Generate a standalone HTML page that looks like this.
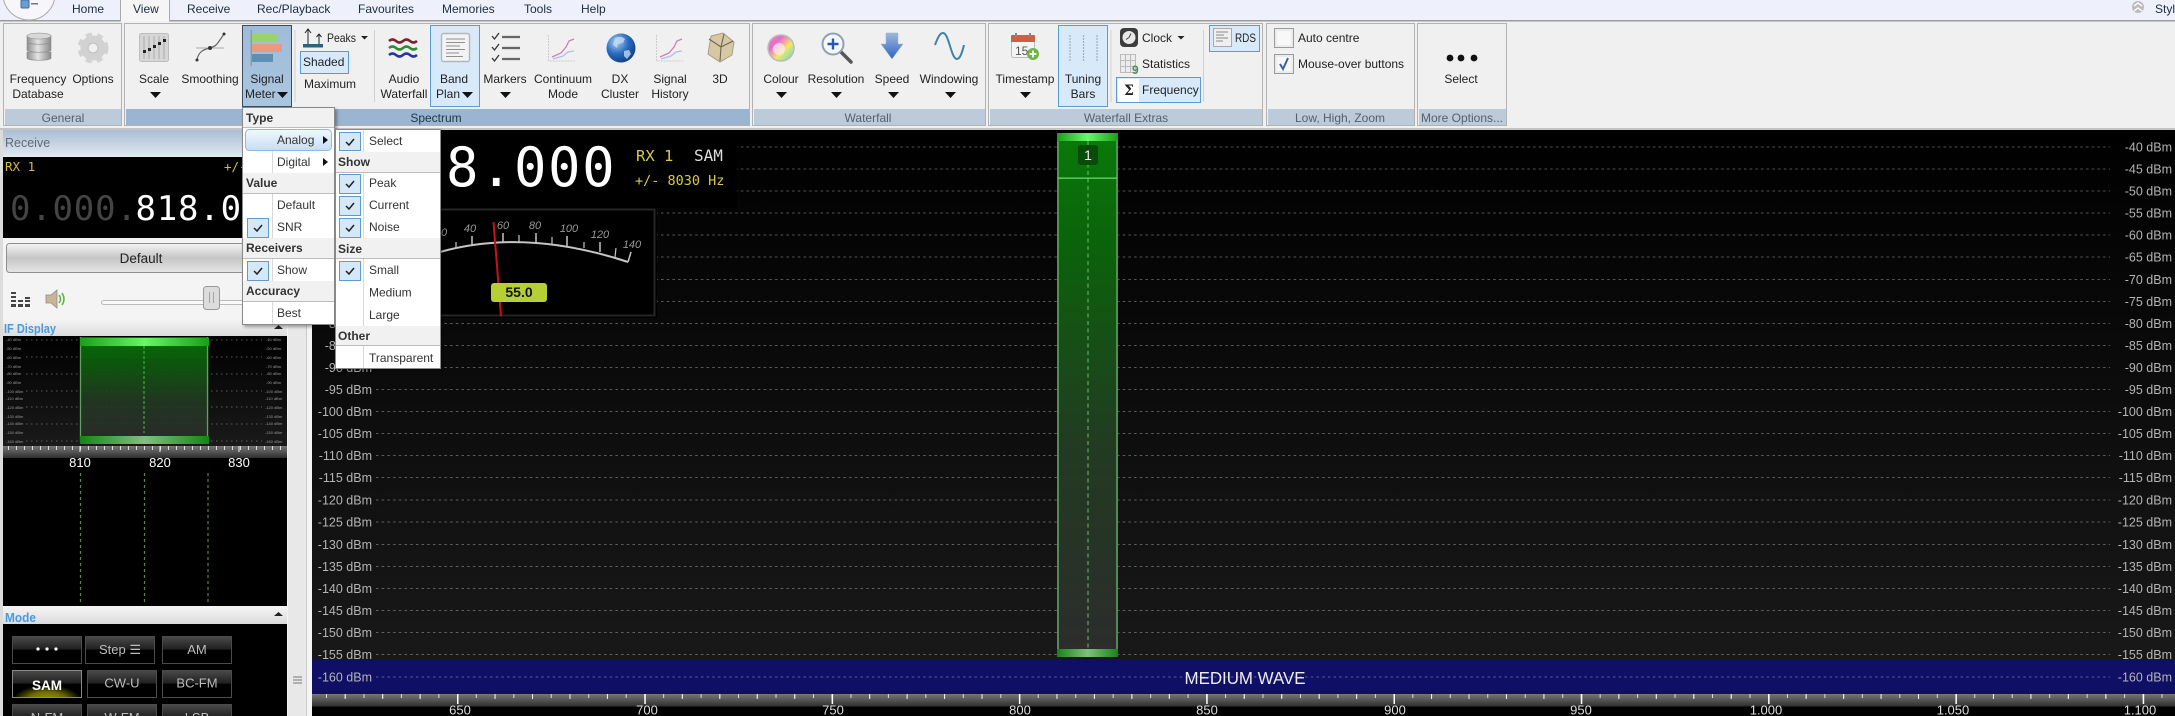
<!DOCTYPE html>
<html><head><meta charset="utf-8"><title>Signal meter</title>
<style>
html,body{margin:0;padding:0;background:#f0f0f0;width:2175px;height:716px;overflow:hidden}
svg{display:block;position:absolute;left:0;top:0}
text{font-family:"Liberation Sans",sans-serif;font-size:12px;fill:#222}
.m{text-anchor:middle}
.tab{fill:#1d2c3e}
.g{fill:#52616f;text-anchor:middle}
.h{font-weight:bold;fill:#333}
.i{fill:#333}
.db{font-size:12.5px;fill:#b4b4b4;text-anchor:end}
.fq{font-size:13px;fill:#ddd;text-anchor:middle}
.mono{font-family:"DejaVu Sans Mono","Liberation Mono",monospace}
.tiny{font-size:4px;fill:#999}
.mb{font-size:13px;fill:#bdbdbd;text-anchor:middle}
.ml{font-size:11px;font-style:italic;fill:#999;text-anchor:middle}
</style></head><body>
<svg width="2175" height="716" viewBox="0 0 2175 716" xmlns="http://www.w3.org/2000/svg">
<defs>
<linearGradient id="specBg" x1="0" y1="0" x2="0" y2="1"><stop offset="0" stop-color="#000"/><stop offset="1" stop-color="#1a1a1a"/></linearGradient>
<linearGradient id="gTop"><stop offset="0" stop-color="#18a018"/><stop offset=".5" stop-color="#66f866"/><stop offset="1" stop-color="#18a018"/></linearGradient>
<linearGradient id="gBot"><stop offset="0" stop-color="#158515"/><stop offset=".5" stop-color="#80c080"/><stop offset="1" stop-color="#158515"/></linearGradient>
<linearGradient id="gBody" x1="0" y1="0" x2="0" y2="1"><stop offset="0" stop-color="#0a7a0a"/><stop offset=".2" stop-color="#0a640a"/><stop offset=".6" stop-color="#223a22"/><stop offset="1" stop-color="#2c2c2c"/></linearGradient>
<linearGradient id="scale" x1="0" y1="0" x2="0" y2="1"><stop offset="0" stop-color="#777"/><stop offset="1" stop-color="#2e2e2e"/></linearGradient>
<linearGradient id="btn" x1="0" y1="0" x2="0" y2="1"><stop offset="0" stop-color="#4a4a4a"/><stop offset=".47" stop-color="#202020"/><stop offset=".5" stop-color="#000"/><stop offset="1" stop-color="#000"/></linearGradient>
<linearGradient id="hdrR" x1="0" y1="0" x2="0" y2="1"><stop offset="0" stop-color="#a9bdd4"/><stop offset="1" stop-color="#e2e9f1"/></linearGradient>
<linearGradient id="hdr" x1="0" y1="0" x2="0" y2="1"><stop offset="0" stop-color="#f6f6f6"/><stop offset="1" stop-color="#dcdcdc"/></linearGradient>
<linearGradient id="def" x1="0" y1="0" x2="0" y2="1"><stop offset="0" stop-color="#f4f4f4"/><stop offset=".5" stop-color="#c6c6c6"/><stop offset="1" stop-color="#e6e6e6"/></linearGradient>
<linearGradient id="an" x1="0" y1="0" x2="0" y2="1"><stop offset="0" stop-color="#f3f8fd"/><stop offset="1" stop-color="#c4def6"/></linearGradient>
<linearGradient id="cyl" x1="0" y1="0" x2="1" y2="0"><stop offset="0" stop-color="#8e8e8e"/><stop offset=".45" stop-color="#e4e4e4"/><stop offset="1" stop-color="#8a8a8a"/></linearGradient>
<linearGradient id="arr" x1="0" y1="0" x2="0" y2="1"><stop offset="0" stop-color="#9db8db"/><stop offset="1" stop-color="#2f63c5"/></linearGradient>
<linearGradient id="rain" x1="0" y1="0" x2="1" y2="1"><stop offset="0" stop-color="#f08a8a"/><stop offset=".3" stop-color="#e86ad8"/><stop offset=".6" stop-color="#f4e860"/><stop offset="1" stop-color="#50d8e8"/></linearGradient>
<radialGradient id="glob" cx=".35" cy=".3" r=".8"><stop offset="0" stop-color="#a9cdf0"/><stop offset=".5" stop-color="#2a6cc0"/><stop offset="1" stop-color="#0e3578"/></radialGradient>
<radialGradient id="sam" cx=".5" cy=".5" r=".5"><stop offset="0" stop-color="#a09800"/><stop offset=".55" stop-color="#6f6a00"/><stop offset="1" stop-color="#000"/></radialGradient>
<linearGradient id="sel" x1="0" y1="0" x2="0" y2="1"><stop offset="0" stop-color="#9ebbd8"/><stop offset="1" stop-color="#aac6df"/></linearGradient>
<clipPath id="sClip"><rect x="13" y="671" width="68" height="26"/></clipPath>
<filter id="sh" x="-10%" y="-10%" width="125%" height="120%"><feDropShadow dx="2" dy="2" stdDeviation="1.5" flood-color="#000" flood-opacity=".35"/></filter>
</defs>

<!-- top bar -->
<rect width="2175" height="20" fill="#eef1fb"/>
<rect y="20" width="2175" height="1.5" fill="#9b9b9b"/>
<circle cx="29" cy="-6" r="26" fill="#f6f6fb" stroke="#a9a9a9"/>
<rect x="21" y="0" width="8" height="8" rx="1" fill="#6f9bd0" stroke="#3b6fa8"/><rect x="31" y="3" width="7" height="1.5" fill="#777"/>
<rect x="120.5" y="-1" width="49" height="23" fill="#f5f5f5" stroke="#a9a9a9"/>
<text class="tab" x="72" y="13">Home</text>
<text class="tab" x="133" y="13">View</text>
<text class="tab" x="187" y="13">Receive</text>
<text class="tab" x="257" y="13">Rec/Playback</text>
<text class="tab" x="358" y="13">Favourites</text>
<text class="tab" x="442" y="13">Memories</text>
<text class="tab" x="524" y="13">Tools</text>
<text class="tab" x="581" y="13">Help</text>
<circle cx="2138" cy="7" r="6" fill="#bcbcbc"/>
<path d="M2134 6l4-3 4 3M2134 11l4-3 4 3" fill="none" stroke="#fff" stroke-width="1.4"/>
<text class="tab" x="2155" y="13">Style</text>

<!-- ribbon -->
<rect y="21.5" width="2175" height="107" fill="#f0f0f0"/>
<rect y="128" width="2175" height="2" fill="#c4c4c4"/>
<!-- panels -->
<g fill="#f0f0f0" stroke="#b2b2b2">
<rect x="3.5" y="23.5" width="118" height="102"/>
<rect x="124.5" y="23.5" width="625" height="102"/>
<rect x="752.5" y="23.5" width="233" height="102"/>
<rect x="988.5" y="23.5" width="274" height="102"/>
<rect x="1266.5" y="23.5" width="148" height="102"/>
<rect x="1417.5" y="23.5" width="89" height="102"/>
</g>
<rect x="5" y="109" width="116" height="16" fill="#bccbd9"/>
<rect x="126" y="109" width="623" height="16" fill="#9ab5d0"/>
<rect x="754" y="109" width="231" height="16" fill="#bccbd9"/>
<rect x="990" y="109" width="272" height="16" fill="#bccbd9"/>
<rect x="1268" y="109" width="146" height="16" fill="#bccbd9"/>
<rect x="1419" y="109" width="87" height="16" fill="#bccbd9"/>
<text class="g" x="63" y="122">General</text>
<text class="g" x="436" y="122" style="fill:#20364c">Spectrum</text>
<text class="g" x="868" y="122">Waterfall</text>
<text class="g" x="1126" y="122">Waterfall Extras</text>
<text class="g" x="1340" y="122">Low, High, Zoom</text>
<text class="g" x="1462" y="122">More Options...</text>

<!-- selected boxes -->
<rect x="242.5" y="25.5" width="49" height="81" fill="url(#sel)" stroke="#3c4d60"/>
<rect x="430.5" y="25.5" width="49" height="81" fill="#d8e9f9" stroke="#5a9bd4"/>
<rect x="1058.5" y="25.5" width="49" height="81" fill="#d8e9f9" stroke="#5a9bd4"/>
<rect x="300.5" y="51.5" width="48" height="22" fill="#d8e9f9" stroke="#5a9bd4"/>
<rect x="1116.5" y="77.5" width="84" height="25" fill="#d8e9f9" stroke="#5a9bd4"/>
<rect x="1209.5" y="25.5" width="50" height="26" fill="#d8e9f9" stroke="#5a9bd4"/>
<g stroke="#cfcfcf"><path d="M295 30V102M374.5 30V102M1111 30V102M1203.5 30V102"/></g>

<!-- DB icon -->
<g stroke="#8a8a8a" stroke-width=".6" fill="url(#cyl)">
<path d="M27 52v6c0 3 24 3 24 0v-6z"/><path d="M27 43v7c0 3 24 3 24 0v-7z"/><path d="M27 36v6c0 3 24 3 24 0v-6z"/>
<ellipse cx="39" cy="36" rx="12" ry="3" fill="#d8d8d8"/>
</g>
<!-- gear -->
<circle cx="93" cy="48" r="9" fill="none" stroke="#d2d2d2" stroke-width="7"/>
<circle cx="93" cy="48" r="13.5" fill="none" stroke="#d2d2d2" stroke-width="4" stroke-dasharray="6 5.25"/>
<circle cx="93" cy="48" r="5" fill="#f0f0f0" stroke="#bdbdbd"/>
<!-- scale -->
<rect x="139.5" y="33.5" width="29" height="28" rx="2" fill="#d6d6d6" stroke="#bdbdbd"/>
<path d="M144 36v23M149 36v23M154 36v23M159 36v23M164 36v23" stroke="#999" stroke-width=".7"/>
<g fill="#222"><rect x="143" y="50" width="3" height="3"/><rect x="148" y="48" width="3" height="3"/><rect x="153" y="45" width="3" height="3"/><rect x="158" y="42" width="3" height="3"/><rect x="163" y="39" width="3" height="3"/></g>
<!-- smoothing -->
<path d="M196 48H224" stroke="#aaa"/>
<path d="M197 60C199 46 213 50 217 44 220 40 222 37 224 34" fill="none" stroke="#666" stroke-width="1.2"/>
<g fill="#333"><circle cx="197" cy="60" r="1.5"/><circle cx="210" cy="48" r="2"/><circle cx="224" cy="34" r="1.5"/></g>
<!-- signal meter icon -->
<rect x="250.5" y="30" width="1.5" height="36" fill="#8d9cab"/>
<rect x="252" y="34" width="25" height="8" fill="#9bd36b"/>
<rect x="252" y="44" width="30" height="8" fill="#e99a7c"/>
<rect x="252" y="54" width="21" height="8" fill="#5f8eb2"/>
<!-- peaks -->
<rect x="303" y="44" width="20" height="3.5" fill="#31607f"/>
<path d="M308 44V30M305 33l3-4 3 4M319 44V34M316.5 37l2.5-3 2.5 3" fill="none" stroke="#222" stroke-width="1"/>
<text x="327" y="42" textLength="29" lengthAdjust="spacingAndGlyphs">Peaks</text>
<path d="M361 36h7l-3.5 3.5z" fill="#222"/>
<text x="303" y="66">Shaded</text>
<text x="304" y="88">Maximum</text>
<!-- audio waterfall -->
<g fill="none" stroke-width="2.6">
<path d="M389 41q3.500-3 7 0t7 0 7 0 7 0" stroke="#7c2230"/>
<path d="M389 48q3.500-3 7 0t7 0 7 0 7 0" stroke="#2f8a34"/>
<path d="M389 55q3.500-3 7 0t7 0 7 0 7 0" stroke="#26389c"/>
</g>
<!-- band plan -->
<rect x="441.5" y="33.5" width="28" height="28" rx="2" fill="#f3f3f3" stroke="#b5b5b5" stroke-width="1.4"/>
<path d="M446 39h19M446 42.5h19M446 46h14M446 49.5h19M446 53h13M446 56.5h17" stroke="#8f8f8f"/>
<!-- markers -->
<path d="M492 36l2.500 3 4.500-6M492 47l2.500 3 4.500-6M492 58l2.500 3 4.500-6" fill="none" stroke="#333" stroke-width="1.3"/>
<path d="M502 37h18M502 48h18M502 59h18" stroke="#666" stroke-width="2.2"/>
<!-- continuum / history -->
<g>
<path d="M548.5 35V61H575" fill="none" stroke="#ccc" stroke-dasharray="2 1"/>
<path d="M552 57l9-4 5-6 3-6 5-2" fill="none" stroke="#d77ab5" stroke-width="1.3"/>
<path d="M553 59l10-3 5-4 6-1" fill="none" stroke="#a7c3ee" stroke-width="1.3"/>
</g>
<g transform="translate(108 0)">
<path d="M548.5 35V61H575" fill="none" stroke="#ccc" stroke-dasharray="2 1"/>
<path d="M552 57l9-4 5-6 3-6 5-2" fill="none" stroke="#d77ab5" stroke-width="1.3"/>
<path d="M553 59l10-3 5-4 6-1" fill="none" stroke="#a7c3ee" stroke-width="1.3"/>
</g>
<!-- globe -->
<circle cx="621" cy="48" r="14.5" fill="url(#glob)"/>
<path d="M615 38c4-2 8-1 10 1l-2 4-5 1-1 4-4-3zM624 51l5-1 2 4-4 5-3-3z" fill="#c9dff5" opacity=".75"/>
<!-- 3D -->
<path d="M711 36l12-3 11 9-2 13-12 7-12-8z" fill="#d6c8a5" stroke="#a99c80"/>
<path d="M721 47l-12-8M721 47l12-6M721 47l-1 14M721 47l3-13" stroke="#6f6651" stroke-width="1.1"/>
<!-- colour -->
<circle cx="781" cy="48" r="13" fill="url(#rain)" stroke="#bbb" stroke-width="1.5"/>
<circle cx="779" cy="49" r="6" fill="#f7f0f8" opacity=".7"/>
<!-- resolution -->
<path d="M841 52l10 10" stroke="#565656" stroke-width="3.5" stroke-linecap="round"/>
<circle cx="833" cy="44" r="10.5" fill="#f4f7fb" stroke="#8ea0b5" stroke-width="2"/>
<path d="M833 38.5v11M827.5 44h11" stroke="#2a55b0" stroke-width="2.4"/>
<!-- speed -->
<path d="M886 33h12v11h5l-11 15-11-15h5z" fill="url(#arr)" stroke="#9db2cc" stroke-width=".5"/>
<!-- windowing -->
<path d="M935 45C938 37 940 33 943 33 949 33 951 59 957 59 960 59 962 53 964 45" fill="none" stroke="#3e83a8" stroke-width="2"/>
<!-- timestamp -->
<rect x="1011.5" y="35.5" width="23" height="22" rx="2" fill="#f4f4f4" stroke="#bbb"/>
<rect x="1011" y="35" width="24" height="7" rx="1" fill="#d45a4a"/>
<rect x="1015" y="33" width="2" height="4" fill="#888"/><rect x="1029" y="33" width="2" height="4" fill="#888"/>
<text x="1015" y="55" style="font-size:12px;fill:#555">15</text>
<circle cx="1033" cy="54" r="6" fill="#6cb83e"/>
<path d="M1033 50.5v7M1029.5 54h7" stroke="#fff" stroke-width="1.8"/>
<!-- tuning bars -->
<path d="M1070 35V62M1083.5 35V62M1097 35V62" stroke="#a5aeb8" stroke-width="1.2" stroke-dasharray="2 1"/>
<!-- clock -->
<rect x="1120" y="28" width="18" height="19" rx="4" fill="#3c3c3c"/>
<circle cx="1129" cy="37.5" r="6.5" fill="#e8e8e8"/>
<path d="M1129 37.5l-3 2M1129 37.5l2-4" stroke="#444"/>
<text x="1142" y="42">Clock</text>
<path d="M1177.5 36h7l-3.5 3.500z" fill="#222"/>
<!-- statistics -->
<rect x="1120.5" y="54.5" width="15" height="18" fill="#ececec" stroke="#bbb"/>
<path d="M1125.5 54v18M1130.5 54v18M1120 60.5h16M1120 66.5h16" stroke="#bbb"/>
<text x="1132" y="74" style="font-size:12px;font-weight:bold;fill:#4b8d5e">9</text>
<text x="1142" y="68">Statistics</text>
<!-- frequency -->
<rect x="1118" y="79" width="21" height="23" fill="#fff"/>
<text class="m" x="1129" y="95" style="font-size:14px;font-weight:bold;font-family:'DejaVu Serif','Liberation Serif',serif">Σ</text>
<text x="1142" y="94">Frequency</text>
<!-- RDS -->
<rect x="1213.5" y="28.5" width="18" height="18" fill="#efefef" stroke="#a9a9a9"/>
<path d="M1216 32h12M1216 35h8M1216 38h12M1216 41h7" stroke="#888"/>
<text x="1235" y="42" textLength="21" lengthAdjust="spacingAndGlyphs">RDS</text>
<!-- check boxes -->
<rect x="1274.5" y="28.5" width="19" height="19" fill="#ececec" stroke="#9b9b9b"/>
<rect x="1277" y="31" width="14" height="14" fill="#f8f8f8"/>
<rect x="1274.5" y="54.5" width="19" height="19" fill="#ececec" stroke="#9b9b9b"/>
<rect x="1277" y="57" width="14" height="14" fill="#f8f8f8"/>
<path d="M1280 64l3 5 5-11" fill="none" stroke="#3a5ea8" stroke-width="2"/>
<text x="1298" y="42">Auto centre</text>
<text x="1298" y="68">Mouse-over buttons</text>
<circle cx="1450" cy="58" r="3.4" fill="#111"/><circle cx="1461" cy="58" r="3.4" fill="#111"/><circle cx="1474" cy="58" r="3.4" fill="#111"/>

<!-- ribbon labels -->
<g>
<text class="m" x="38" y="83">Frequency</text><text class="m" x="38" y="98">Database</text>
<text class="m" x="93" y="83">Options</text>
<text class="m" x="154" y="83">Scale</text>
<text class="m" x="210" y="83">Smoothing</text>
<text class="m" x="267" y="83">Signal</text><text x="245" y="98">Meter</text>
<text class="m" x="404" y="83">Audio</text><text class="m" x="404" y="98">Waterfall</text>
<text class="m" x="454" y="83">Band</text><text x="436" y="98">Plan</text>
<text class="m" x="505" y="83">Markers</text>
<text class="m" x="563" y="83">Continuum</text><text class="m" x="563" y="98">Mode</text>
<text class="m" x="620" y="83">DX</text><text class="m" x="620" y="98">Cluster</text>
<text class="m" x="670" y="83">Signal</text><text class="m" x="670" y="98">History</text>
<text class="m" x="720" y="83">3D</text>
<text class="m" x="781" y="83">Colour</text>
<text class="m" x="836" y="83">Resolution</text>
<text class="m" x="892" y="83">Speed</text>
<text class="m" x="949" y="83">Windowing</text>
<text class="m" x="1025" y="83">Timestamp</text>
<text class="m" x="1083" y="83">Tuning</text><text class="m" x="1083" y="98">Bars</text>
<text class="m" x="1461" y="83">Select</text>
</g>
<g fill="#111">
<path d="M150 92h11l-5.500 6z"/><path d="M277 92h11l-5.500 6z"/><path d="M462 92h11l-5.500 6z"/>
<path d="M500 92h11l-5.500 6z"/><path d="M776 92h11l-5.500 6z"/><path d="M831 92h11l-5.500 6z"/>
<path d="M888 92h11l-5.500 6z"/><path d="M945 92h11l-5.500 6z"/><path d="M1020 92h11l-5.500 6z"/>
</g>

<!-- left strip / splitter -->
<rect y="130" width="312" height="586" fill="#f4f4f4"/>
<rect x="0" y="130" width="3" height="586" fill="#dcdcdc"/>
<rect x="288" y="130" width="18" height="586" fill="#e8e8e8"/>
<rect x="306" y="130" width="1" height="586" fill="#c9c9c9"/>
<path d="M293 677h9M293 680h9M293 683h9" stroke="#777"/>

<!-- Receive panel -->
<rect x="3" y="130" width="284" height="27" fill="url(#hdrR)"/>
<text x="5" y="147" style="font-size:12.5px;fill:#5f6a76">Receive</text>
<rect x="3" y="157" width="284" height="81" fill="#000"/>
<text x="5" y="171" style="font-size:12.5px;fill:#d6bc3a" class="mono">RX 1</text>
<text x="224" y="171" style="font-size:12.5px;fill:#d6bc3a" class="mono">+/-</text>
<text x="10" y="220" class="mono" style="font-size:34px;letter-spacing:.8px;fill:#444">0.000.</text>
<text x="135.5" y="220" class="mono" style="font-size:34px;letter-spacing:.8px;fill:#fff">818.000</text>
<rect x="6.5" y="243.5" width="276" height="29" rx="3" fill="url(#def)" stroke="#8f8f8f"/>
<text class="m" x="141" y="263" style="font-size:13.5px;fill:#222">Default</text>
<g fill="#444">
<rect x="11" y="292" width="5" height="2"/><rect x="11" y="296" width="5" height="2"/><rect x="11" y="300" width="5" height="2"/><rect x="11" y="304" width="5" height="3"/>
<rect x="18" y="300" width="5" height="2"/><rect x="18" y="304" width="5" height="3"/>
<rect x="25" y="297" width="5" height="2"/><rect x="25" y="300" width="5" height="2"/><rect x="25" y="304" width="5" height="3"/>
</g>
<path d="M46 295h5l6-5v18l-6-5h-5z" fill="#c8b598" stroke="#8c8c8c" stroke-width=".8"/>
<path d="M59 295q3 4 0 8M62 293q4 6 0 12" fill="none" stroke="#55b83a" stroke-width="1.5"/>
<rect x="101.5" y="300.5" width="148" height="4" rx="2" fill="#fafafa" stroke="#bbb"/>
<rect x="203.5" y="286.5" width="16" height="23" rx="3" fill="#dcdcdc" stroke="#999"/>
<path d="M209.5 292v11M213.5 292v11" stroke="#a5a5a5"/>

<!-- IF display -->
<rect x="3" y="318" width="284" height="18" fill="url(#hdr)"/>
<text x="4" y="333" textLength="52" lengthAdjust="spacingAndGlyphs" style="font-size:13px;font-weight:bold;fill:#4a9ae0">IF Display</text>
<path d="M274 329h9l-4.500-4z" fill="#222"/>
<rect x="3" y="336" width="284" height="110" fill="url(#specBg)"/>
<path d="M26 340H262M26 357H262M26 374H262M26 391H262M26 407H262M26 424H262M26 441H262" stroke="#777" stroke-width=".8" stroke-dasharray="1.5 3.5"/>
<g>
<text class="tiny" x="6" y="341">-40 dBm</text><text class="tiny" x="6" y="350">-50 dBm</text><text class="tiny" x="6" y="359">-60 dBm</text><text class="tiny" x="6" y="368">-70 dBm</text><text class="tiny" x="6" y="375">-80 dBm</text><text class="tiny" x="6" y="384">-90 dBm</text><text class="tiny" x="6" y="393">-100 dBm</text><text class="tiny" x="6" y="400">-110 dBm</text><text class="tiny" x="6" y="409">-120 dBm</text><text class="tiny" x="6" y="418">-130 dBm</text><text class="tiny" x="6" y="425">-140 dBm</text><text class="tiny" x="6" y="434">-150 dBm</text><text class="tiny" x="6" y="443">-160 dBm</text>
<text class="tiny" x="266" y="341">-40 dBm</text><text class="tiny" x="266" y="350">-50 dBm</text><text class="tiny" x="266" y="359">-60 dBm</text><text class="tiny" x="266" y="368">-70 dBm</text><text class="tiny" x="266" y="375">-80 dBm</text><text class="tiny" x="266" y="384">-90 dBm</text><text class="tiny" x="265" y="393">-100 dBm</text><text class="tiny" x="265" y="400">-110 dBm</text><text class="tiny" x="265" y="409">-120 dBm</text><text class="tiny" x="265" y="418">-130 dBm</text><text class="tiny" x="265" y="425">-140 dBm</text><text class="tiny" x="265" y="434">-150 dBm</text><text class="tiny" x="265" y="443">-160 dBm</text>
</g>
<rect x="80" y="337" width="128.5" height="106" fill="url(#gBody)" opacity=".9"/>
<path d="M80.5 337V443M207.500 337V443" stroke="#5f9f5f" stroke-width="1.3"/>
<path d="M144 346V433" stroke="#3fa03f" stroke-dasharray="3 2" stroke-width="1.3"/>
<rect x="80" y="338" width="129" height="8" fill="url(#gTop)"/>
<rect x="80" y="436" width="129" height="8" fill="url(#gBot)"/>
<rect x="3" y="446" width="284" height="12" fill="url(#scale)"/>
<path d="M8 448H284" stroke="#ddd" stroke-width="4" stroke-dasharray="1 7" fill="none"/>
<path d="M80 446V452M160 446V452M239 446V452" stroke="#eee"/>
<rect x="3" y="458" width="284" height="148" fill="#000"/>
<text class="m" x="80" y="467" style="font-size:13px;fill:#fff">810</text>
<text class="m" x="160" y="467" style="font-size:13px;fill:#fff">820</text>
<text class="m" x="239" y="467" style="font-size:13px;fill:#fff">830</text>
<path d="M80.5 473V604M144.5 473V604M208 473V604" stroke="#4f8a55" stroke-width="1.2" stroke-dasharray="3 3"/>

<!-- Mode -->
<rect x="3" y="606" width="284" height="18" fill="url(#hdr)"/>
<text x="5" y="622" textLength="31" lengthAdjust="spacingAndGlyphs" style="font-size:13px;font-weight:bold;fill:#4a9ae0">Mode</text>
<path d="M274 616h9l-4.500-4z" fill="#222"/>
<rect x="3" y="624" width="284" height="92" fill="#000"/>
<g fill="url(#btn)" stroke="#4b4b4b">
<rect x="12.5" y="636.5" width="69" height="27"/><rect x="85.5" y="636.5" width="69" height="27"/><rect x="162.5" y="636.5" width="69" height="27"/>
<rect x="87.5" y="670.5" width="69" height="27"/><rect x="162.5" y="670.5" width="69" height="27"/>
<rect x="12.5" y="704.5" width="69" height="27"/><rect x="87.5" y="704.5" width="69" height="27"/><rect x="162.5" y="704.5" width="69" height="27"/>
</g>
<rect x="12.5" y="670.5" width="69" height="27" fill="url(#btn)" stroke="#8a8a8a"/>
<ellipse cx="47" cy="700" rx="34" ry="15" fill="url(#sam)" clip-path="url(#sClip)"/>
<circle cx="38" cy="649" r="1.6" fill="#fff"/><circle cx="47" cy="649" r="1.6" fill="#fff"/><circle cx="56" cy="649" r="1.6" fill="#fff"/>
<text class="mb" x="120" y="654">Step ☰</text>
<text class="mb" x="197" y="654">AM</text>
<text class="mb" x="47" y="690" style="font-size:13.5px;font-weight:bold;fill:#fff">SAM</text>
<text class="mb" x="122" y="687.5">CW-U</text>
<text class="mb" x="197" y="687.5">BC-FM</text>
<text class="mb" x="47" y="722">N-FM</text>
<text class="mb" x="122" y="722">W-FM</text>
<text class="mb" x="197" y="722">LSB</text>

<!-- Spectrum -->
<rect x="312" y="130" width="1863" height="564" fill="url(#specBg)"/>
<rect x="312" y="659" width="1863" height="35" fill="#0f0f66"/>
<path d="M376 147H2110M376 169H2110M376 191H2110M376 213H2110M376 235H2110M376 257H2110M376 279.5H2110M376 301.5H2110M376 323.5H2110M376 345.5H2110M376 367.5H2110M376 389.5H2110M376 411.5H2110M376 433.5H2110M376 455.5H2110M376 477.5H2110M376 500H2110M376 522H2110M376 544.5H2110M376 566.5H2110M376 588.5H2110M376 610.5H2110M376 632.5H2110M376 654.5H2110M376 677H2110" stroke="#fff" stroke-opacity=".33" stroke-dasharray="2.5 3.2" fill="none"/>
<g>
<text class="db" x="372" y="328">-80 dBm</text><text class="db" x="372" y="350">-85 dBm</text><text class="db" x="372" y="372">-90 dBm</text><text class="db" x="372" y="394">-95 dBm</text><text class="db" x="372" y="416">-100 dBm</text><text class="db" x="372" y="438">-105 dBm</text><text class="db" x="372" y="460">-110 dBm</text><text class="db" x="372" y="482">-115 dBm</text><text class="db" x="372" y="504.5">-120 dBm</text><text class="db" x="372" y="526.5">-125 dBm</text><text class="db" x="372" y="549">-130 dBm</text><text class="db" x="372" y="571">-135 dBm</text><text class="db" x="372" y="593">-140 dBm</text><text class="db" x="372" y="615">-145 dBm</text><text class="db" x="372" y="637">-150 dBm</text><text class="db" x="372" y="659">-155 dBm</text><text class="db" x="372" y="681.5">-160 dBm</text>
<text class="db" x="2172" y="151.5">-40 dBm</text><text class="db" x="2172" y="173.5">-45 dBm</text><text class="db" x="2172" y="195.5">-50 dBm</text><text class="db" x="2172" y="217.5">-55 dBm</text><text class="db" x="2172" y="239.5">-60 dBm</text><text class="db" x="2172" y="261.5">-65 dBm</text><text class="db" x="2172" y="284">-70 dBm</text><text class="db" x="2172" y="306">-75 dBm</text><text class="db" x="2172" y="328">-80 dBm</text><text class="db" x="2172" y="350">-85 dBm</text><text class="db" x="2172" y="372">-90 dBm</text><text class="db" x="2172" y="394">-95 dBm</text><text class="db" x="2172" y="416">-100 dBm</text><text class="db" x="2172" y="438">-105 dBm</text><text class="db" x="2172" y="460">-110 dBm</text><text class="db" x="2172" y="482">-115 dBm</text><text class="db" x="2172" y="504.5">-120 dBm</text><text class="db" x="2172" y="526.5">-125 dBm</text><text class="db" x="2172" y="549">-130 dBm</text><text class="db" x="2172" y="571">-135 dBm</text><text class="db" x="2172" y="593">-140 dBm</text><text class="db" x="2172" y="615">-145 dBm</text><text class="db" x="2172" y="637">-150 dBm</text><text class="db" x="2172" y="659">-155 dBm</text><text class="db" x="2172" y="681.5">-160 dBm</text>
</g>
<!-- tuning bar -->
<rect x="1057" y="133" width="61" height="524" fill="url(#gBody)"/>
<path d="M1058 133V657M1117 133V657" stroke="#5f9f5f" stroke-width="1.6"/>
<path d="M1088 141V648" stroke="#6fc56f" stroke-opacity=".8" stroke-width="1.2" stroke-dasharray="4 3.5"/>
<rect x="1057" y="133" width="61" height="8" fill="url(#gTop)"/>
<rect x="1058" y="177.5" width="59" height="1.3" fill="#66d866"/>
<rect x="1078" y="145" width="20" height="20" rx="3" fill="#0a4a0a"/>
<text class="m" x="1088" y="160" style="font-size:14px;fill:#eee">1</text>
<rect x="1057" y="649" width="61" height="8" fill="url(#gBot)"/>
<!-- bottom scale -->
<rect x="312" y="694" width="1863" height="12.5" fill="url(#scale)"/>
<rect x="312" y="706.5" width="1863" height="10" fill="#000"/>
<path d="M326 696H2175" stroke="#ddd" stroke-width="4" stroke-dasharray="1 17.73" fill="none"/>
<path d="M344.7 696.5H2175" stroke="#eee" stroke-width="5" stroke-dasharray="1 36.46" fill="none"/>
<path d="M457 699H2175" stroke="#fff" stroke-width="10" stroke-dasharray="1.5 185.8" fill="none"/>
<text class="fq" x="460" y="714.5">650</text><text class="fq" x="647" y="714.5">700</text><text class="fq" x="833" y="714.5">750</text><text class="fq" x="1020" y="714.5">800</text><text class="fq" x="1207" y="714.5">850</text><text class="fq" x="1395" y="714.5">900</text><text class="fq" x="1581" y="714.5">950</text><text class="fq" x="1766" y="714.5">1.000</text><text class="fq" x="1953" y="714.5">1.050</text><text class="fq" x="2140" y="714.5">1.100</text>
<text class="m" x="1245" y="684" textLength="121" lengthAdjust="spacingAndGlyphs" style="font-size:17.5px;fill:#ececec">MEDIUM WAVE</text>

<!-- Frequency overlay -->
<rect x="312" y="130" width="425" height="78" fill="#000"/>
<rect x="312" y="208" width="345" height="110" fill="#000"/>
<rect x="312.5" y="209.5" width="342" height="106" fill="#000" stroke="#262626" stroke-width="2"/>
<text x="378" y="186" class="mono" style="font-size:54px;letter-spacing:1.5px;fill:#fff">818.000</text>
<text x="636" y="161" class="mono" style="font-size:15.5px;fill:#d6cc44">RX 1</text>
<text x="694" y="161" class="mono" style="font-size:16px;fill:#ddd">SAM</text>
<text x="635" y="185" class="mono" style="font-size:13.5px;fill:#d6cc44">+/- 8030 Hz</text>
<!-- meter -->
<path d="M440 252Q525 228 628 262" fill="none" stroke="#c6c6c6" stroke-width="2"/>
<path d="M472 236V245M503 233V243M536 233V243M567 236V246M600 242V252M631 252L628 262" stroke="#c6c6c6" stroke-width="1.5"/>
<path d="M456 242V248M519 235V243M552 237V244M584 242V248M616 248L615 257" stroke="#c6c6c6" stroke-width="1.2"/>
<text class="ml" x="441" y="236">20</text>
<text class="ml" x="470" y="232">40</text><text class="ml" x="503" y="229">60</text><text class="ml" x="535" y="229">80</text><text class="ml" x="569" y="232">100</text><text class="ml" x="600" y="238">120</text><text class="ml" x="632" y="248">140</text>
<path d="M493.5 222L501 316" stroke="#c8121a" stroke-width="2"/>
<rect x="491" y="283" width="56" height="19" rx="3" fill="#b5cf35"/>
<text class="m" x="519" y="297" style="font-size:14px;font-weight:bold;fill:#111">55.0</text>

<!-- menu 1 -->
<g filter="url(#sh)"><rect x="242.5" y="107.5" width="92" height="217" fill="#fff" stroke="#8a8a8a"/></g>
<g fill="#f1f1f1">
<rect x="243" y="108" width="91" height="19"/><rect x="243" y="173" width="91" height="20"/><rect x="243" y="238" width="91" height="20"/><rect x="243" y="281" width="91" height="20"/>
</g>
<path d="M243 127.5H334M243 193.5H334M243 258.5H334M243 301.5H334" stroke="#bdbdbd"/>
<path d="M272.5 129V173M272.5 194V238M272.5 259V281M272.5 302V324" stroke="#d8d8d8"/>
<rect x="245.5" y="129.5" width="86" height="21" rx="4" fill="url(#an)" stroke="#8cb9e0"/>
<text class="h" x="246" y="122">Type</text>
<text class="i" x="277" y="144">Analog</text><path d="M323 136l5 4-5 4z" fill="#111"/>
<text class="i" x="277" y="166">Digital</text><path d="M323 158l5 4-5 4z" fill="#111"/>
<text class="h" x="246" y="187">Value</text>
<text class="i" x="277" y="209">Default</text>
<text class="i" x="277" y="231">SNR</text>
<text class="h" x="246" y="252">Receivers</text>
<text class="i" x="277" y="274">Show</text>
<text class="h" x="246" y="295">Accuracy</text>
<text class="i" x="277" y="317">Best</text>
<g fill="#d5e8f8" stroke="#5a9bd4"><rect x="247.5" y="218.5" width="21" height="19"/><rect x="247.5" y="261.5" width="21" height="19"/></g>
<path d="M254 228l3 3 5-6M254 271l3 3 5-6" fill="none" stroke="#222" stroke-width="1.5"/>

<!-- menu 2 -->
<g filter="url(#sh)"><rect x="335.5" y="129.5" width="105" height="239" fill="#fff" stroke="#8a8a8a"/></g>
<g fill="#f1f1f1">
<rect x="336" y="152" width="104" height="20"/><rect x="336" y="238" width="104" height="20"/><rect x="336" y="326" width="104" height="19"/>
</g>
<path d="M336 172.5H440M336 258.5H440M336 345.500H440" stroke="#bdbdbd"/>
<path d="M363.5 130V152M363.5 173V238M363.5 259V326M363.5 346V368" stroke="#d8d8d8"/>
<text class="i" x="369" y="145">Select</text>
<text class="h" x="338" y="166">Show</text>
<text class="i" x="369" y="187">Peak</text>
<text class="i" x="369" y="209">Current</text>
<text class="i" x="369" y="231">Noise</text>
<text class="h" x="338" y="253">Size</text>
<text class="i" x="369" y="274">Small</text>
<text class="i" x="369" y="296.5">Medium</text>
<text class="i" x="369" y="319">Large</text>
<text class="h" x="338" y="340">Other</text>
<text class="i" x="369" y="362">Transparent</text>
<g fill="#d5e8f8" stroke="#5a9bd4"><rect x="339.5" y="132.5" width="21" height="18"/><rect x="339.5" y="174.5" width="21" height="19"/><rect x="339.5" y="196.5" width="21" height="19"/><rect x="339.5" y="218.5" width="21" height="19"/><rect x="339.5" y="261.5" width="21" height="19"/></g>
<path d="M346 142l3 3 5-6M346 184l3 3 5-6M346 206l3 3 5-6M346 228l3 3 5-6M346 271l3 3 5-6" fill="none" stroke="#222" stroke-width="1.5"/>
</svg>
</body></html>
